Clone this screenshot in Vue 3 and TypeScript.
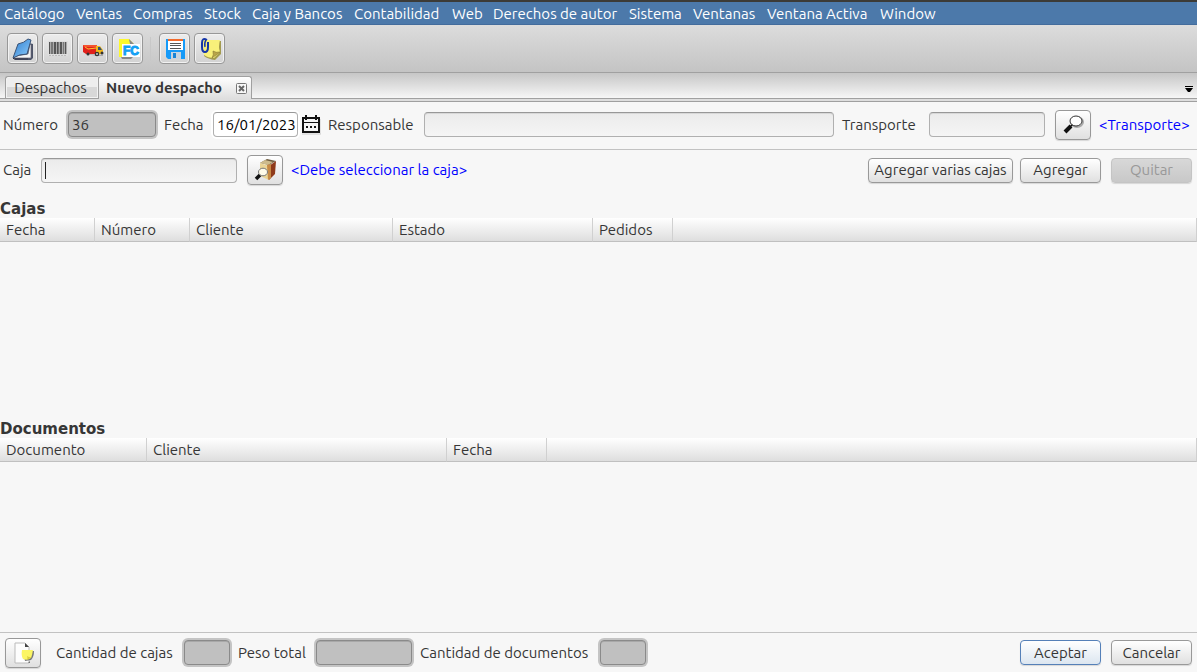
<script setup lang="ts">
import { ref } from 'vue'

interface Column {
  title: string
  width: number
}

const menus: string[] = [
  'Catálogo', 'Ventas', 'Compras', 'Stock', 'Caja y Bancos', 'Contabilidad',
  'Web', 'Derechos de autor', 'Sistema', 'Ventanas', 'Ventana Activa', 'Window',
]

const boxColumns: Column[] = [
  { title: 'Fecha', width: 95 },
  { title: 'Número', width: 95 },
  { title: 'Cliente', width: 203 },
  { title: 'Estado', width: 200 },
  { title: 'Pedidos', width: 80 },
]

const documentColumns: Column[] = [
  { title: 'Documento', width: 147 },
  { title: 'Cliente', width: 300 },
  { title: 'Fecha', width: 100 },
]

const dispatchNumber = ref('36')
const date = ref('16/01/2023')
const responsible = ref('')
const transport = ref('')
const box = ref('')
</script>

<template>
  <div class="window">
    <nav class="menubar">
      <button v-for="menu in menus" :key="menu" type="button">{{ menu }}</button>
    </nav>

    <div class="toolbar">
      <button type="button" class="tool" aria-label="Catálogo">
        <svg width="24" height="24" viewBox="0 0 24 24">
          <defs>
            <linearGradient id="book" x1="0" y1="0" x2="1" y2="1">
              <stop offset="0" stop-color="#2f7fd0" /><stop offset="1" stop-color="#8fcdfc" />
            </linearGradient>
          </defs>
          <path d="M18 6l4 1v14l-2 2H4l-1-2z" fill="#4d5468" />
          <path d="M3 21l2-2 12-2 2-10 1 1v13z" fill="#f4f4f4" stroke="#667" stroke-width=".7" />
          <path d="M7 7q6-1 10-5l3 1-4 14Q8 17 2 21z" fill="url(#book)" stroke="#3b5376" stroke-width="1" />
          <path d="M2 21l1 1h14" fill="none" stroke="#334" stroke-width="1" />
        </svg>
      </button>
      <button type="button" class="tool" aria-label="Código de barras">
        <svg width="24" height="24" viewBox="0 0 24 24">
          <path d="M2 4h20v15H2z" fill="#dedede" />
          <path d="M3 5h1v12H3zM8 5h2v12H8zM11 5h1v12h-1zM14 5h2v12h-2zM19 5h1v12h-1z" fill="#555" />
          <path d="M5 5h2v12H5zM12 5h1v12h-1zM17 5h1v12h-1z" fill="#777" />
          <path d="M4 5h1v12H4zM7 5h1v12H7zM10 5h1v12h-1zM13 5h1v12h-1zM16 5h1v12h-1zM18 5h1v12h-1zM20 5h1v12h-1z" fill="#aaa" />
          <path d="M3 18.500h18" stroke="#bbb" stroke-width="1" stroke-dasharray="2 1" />
        </svg>
      </button>
      <button type="button" class="tool" aria-label="Despachos">
        <svg width="24" height="24" viewBox="0 0 24 24">
          <path d="M3 17l14 2h5v-1z" fill="#aaa" />
          <path d="M2 8h14v9H5l-3-2z" fill="#e0211b" />
          <path d="M2 8h14v2H3z" fill="#f5532e" />
          <path d="M4 10l3 2 8-1" fill="none" stroke="#ffc42e" stroke-width="1" />
          <path d="M15 9h4l3 4v4h-7z" fill="#f0b51b" />
          <path d="M17 10h2l2 3h-4z" fill="#35536c" />
          <circle cx="7" cy="17" r="1.500" fill="#333" /><circle cx="16" cy="17" r="2.300" fill="#333" />
          <circle cx="21" cy="16" r="1.500" fill="#333" /><circle cx="16" cy="17" r="1" fill="#ccc" />
        </svg>
      </button>
      <button type="button" class="tool" aria-label="Factura">
        <svg width="24" height="24" viewBox="0 0 24 24">
          <path d="M5 20h12l-2 2H6z" fill="#888" />
          <path d="M3 2h10l5 5v13H3z" fill="#fdf92c" />
          <path d="M13 2l5 5h-4z" fill="#888" />
          <path d="M6 7h18v13H6z" fill="#fff" />
          <text x="15" y="18" class="fc">FC</text>
        </svg>
      </button>
      <span class="separator"></span>
      <button type="button" class="tool" aria-label="Guardar">
        <svg width="24" height="24" viewBox="0 0 24 24">
          <path d="M3 2h19v20H5l-2-2z" fill="#159af8" />
          <path d="M5 3h15v10H5z" fill="#fff" /><path d="M5 2h15v2H5z" fill="#f26a2b" />
          <path d="M7 6.500h11M7 8.500h11M7 11.500h11" stroke="#555" stroke-width="1" />
          <path d="M8 15h10v7H8z" fill="#c8d4df" /><path d="M10 16h3v5h-3z" fill="#1784d6" />
        </svg>
      </button>
      <button type="button" class="tool" aria-label="Adjuntar nota">
        <svg width="24" height="24" viewBox="0 0 24 24">
          <path d="M7 4h16v13l-6 6q-7-1-11-4z" fill="#a39b50" />
          <path d="M5 3h17q-2 7 0 12l-6 6q-6 0-10-3-1-6-1-15z" fill="#f8f07a" />
          <path d="M14 21q2-3 1-7 3 2 7 1z" fill="#b9a548" stroke="#847734" stroke-width=".6" />
          <path d="M9 3Q4 0 4 6v4q0 5 3 5t3-5V5" fill="none" stroke="#1536a8" stroke-width="2" />
          <path d="M8 3q-2 3-1 7" fill="none" stroke="#1536a8" stroke-width="1.400" />
        </svg>
      </button>
    </div>

    <div class="tabs" role="tablist">
      <button type="button" class="tab first" role="tab" aria-selected="false">Despachos</button>
      <div class="tab active">
        <button type="button" class="tab-title" role="tab" aria-selected="true">Nuevo despacho</button>
        <button type="button" class="close" aria-label="Cerrar">
          <svg width="11" height="11" viewBox="0 0 11 11">
            <rect x=".5" y=".5" width="10" height="10" rx="1" fill="#f8f8f8" stroke="#777" />
            <path d="M3 3l5 5M8 3L3 8" stroke="#666" stroke-width="2" />
          </svg>
        </button>
      </div>
      <button type="button" class="tab-list" aria-label="Lista de pestañas">
        <svg width="8" height="6" viewBox="0 0 8 6"><path d="M0 0h8v1H0zM0 2h8L5 6H3z" fill="#000" /></svg>
      </button>
    </div>

    <form class="content" @submit.prevent>
      <div class="row general">
        <label for="number" class="number-label">Número</label>
        <input id="number" v-model="dispatchNumber" class="locked number" type="text" readonly />
        <label for="date" class="date-label">Fecha</label>
        <input id="date" v-model="date" class="date" type="text" />
        <button type="button" class="calendar" aria-label="Elegir fecha">
          <svg width="20" height="20" viewBox="0 0 20 20">
            <path d="M1 3h18v15H1z" fill="#eee" />
            <path d="M2 3h16v14H2z" fill="#f4f4f4" stroke="#111" stroke-width="2" />
            <path d="M1 7.500h18" stroke="#111" stroke-width="1" />
            <path d="M5 0v5M15 0v5" stroke="#111" stroke-width="2" />
            <path d="M5 11h2v2H5zM9 11h2v2H9zM13 11h2v2h-2z" fill="#111" />
            <path d="M1 19h19V4" fill="none" stroke="#ccc" stroke-width="1" />
          </svg>
        </button>
        <label for="responsible" class="responsible-label">Responsable</label>
        <input id="responsible" v-model="responsible" class="grow" type="text" />
        <label for="transport" class="transport-label">Transporte</label>
        <input id="transport" v-model="transport" class="transport" type="text" />
        <button type="button" class="search" aria-label="Buscar transporte">
          <svg width="24" height="24" viewBox="0 0 24 24">
            <ellipse cx="16" cy="9" rx="6" ry="5" fill="none" stroke="#aaa" stroke-width="2" />
            <path d="M10 13l-6 6" stroke="#111" stroke-width="4" />
            <path d="M9 14l3-3" stroke="#111" stroke-width="1.500" />
            <ellipse cx="15" cy="8" rx="6" ry="5" fill="#fff" stroke="#333" stroke-width="1" />
          </svg>
        </button>
        <span class="hint transport-hint">&lt;Transporte&gt;</span>
      </div>

      <div class="row box-row">
        <label for="box" class="box-label">Caja</label>
        <span class="box-field">
          <input id="box" v-model="box" type="text" />
          <span class="caret"></span>
        </span>
        <button type="button" class="search" aria-label="Buscar caja">
          <svg width="24" height="24" viewBox="0 0 24 24">
            <path d="M7 5l7-4 9 2-7 4z" fill="#6e5d3f" />
            <path d="M7 5l5-3 8 2-5 3z" fill="#cdbb8c" />
            <path d="M7 5l9 3v14l-9-4z" fill="#ead596" />
            <path d="M16 8l7-5-1 13-6 6z" fill="#8f3a1a" />
            <path d="M14 7l4-1v14l-3 2z" fill="#c78a45" />
            <path d="M7 17l-4 4" stroke="#111" stroke-width="3.500" />
            <ellipse cx="10" cy="14" rx="4.500" ry="3.800" fill="#fffbe8" stroke="#777" stroke-width="1" />
          </svg>
        </button>
        <span class="hint">&lt;Debe seleccionar la caja&gt;</span>
        <div class="actions">
          <button type="button" class="push several">Agregar varias cajas</button>
          <button type="button" class="push">Agregar</button>
          <button type="button" class="push remove" disabled>Quitar</button>
        </div>
      </div>

      <section class="list boxes">
        <h2 id="boxes-title">Cajas</h2>
        <table aria-labelledby="boxes-title">
          <colgroup>
            <col v-for="c in boxColumns" :key="c.title" :style="{ width: c.width + 'px' }" />
            <col />
          </colgroup>
          <thead>
            <tr>
              <th v-for="c in boxColumns" :key="c.title" scope="col">{{ c.title }}</th>
              <td></td>
            </tr>
          </thead>
        </table>
      </section>

      <section class="list documents">
        <h2 id="documents-title">Documentos</h2>
        <table aria-labelledby="documents-title">
          <colgroup>
            <col v-for="c in documentColumns" :key="c.title" :style="{ width: c.width + 'px' }" />
            <col />
          </colgroup>
          <thead>
            <tr>
              <th v-for="c in documentColumns" :key="c.title" scope="col">{{ c.title }}</th>
              <td></td>
            </tr>
          </thead>
        </table>
      </section>

      <footer class="row footer">
        <button type="button" class="search note" aria-label="Observaciones">
          <svg width="24" height="24" viewBox="0 0 24 24">
            <path d="M4 2h10l4 4v16H4z" fill="#fdfdfd" stroke="#bbb" stroke-width="1" />
            <path d="M14 2v4h4z" fill="#444" />
            <path d="M8 22h9l2-2v2z" fill="#777" />
            <path d="M12 10h11q0 6-3 9l-6 1z" fill="#777" />
            <path d="M11 9h11q-1 6-2 8-4 3-8 1-2-3-1-9z" fill="#fbf564" />
            <path d="M16 19q1-2 0-4 3 2 5 1z" fill="#d9cd3d" />
          </svg>
        </button>
        <label for="box-count" class="box-count-label">Cantidad de cajas</label>
        <input id="box-count" class="locked count" type="text" readonly />
        <label for="weight" class="weight-label">Peso total</label>
        <input id="weight" class="locked weight" type="text" readonly />
        <label for="document-count" class="document-count-label">Cantidad de documentos</label>
        <input id="document-count" class="locked count" type="text" readonly />
        <div class="actions">
          <button type="submit" class="push primary">Aceptar</button>
          <button type="button" class="push cancel">Cancelar</button>
        </div>
      </footer>
    </form>
  </div>
</template>

<style>
body {
  margin: 0;
}
</style>

<style scoped>
* {
  box-sizing: border-box;
}

.window {
  display: flex;
  flex-direction: column;
  min-height: 100vh;
  background: #f7f7f7;
  color: #363636;
  font: 15px/20px Ubuntu, "Noto Sans", sans-serif;
}

button,
input {
  margin: 0;
  padding: 0;
  font: inherit;
  color: inherit;
  white-space: nowrap;
}

button {
  border: 0;
  background: none;
}

svg {
  display: block;
}

.menubar {
  display: grid;
  grid-template-columns: 72px 57px 71px 48px 102px 98px 41px 136px 64px 74px 113px 1fr;
  height: 25px;
  padding-left: 4px;
  border-top: 2px solid #3c3b37;
  border-bottom: 1px solid #436c9c;
  background: #4c79aa;
  color: #fff;
}

.menubar button {
  padding-top: 1px;
  text-align: left;
}

.toolbar {
  display: flex;
  align-items: center;
  gap: 4px;
  height: 48px;
  padding-left: 7px;
  border-bottom: 1px solid #a0a0a0;
  background: linear-gradient(#dcdcdc, #c4c4c4);
}

.tool,
.search {
  display: flex;
  align-items: center;
  justify-content: center;
  border: 1px solid #989898;
  border-radius: 4px;
  background: linear-gradient(#fff, #e0e0e0);
  box-shadow: 0 1px 1px #0002;
}

.tool {
  width: 31px;
  height: 31px;
  background: linear-gradient(#ececec, #d2d2d2);
  box-shadow: inset 0 0 0 1px #f2f2f2;
}

.fc {
  font: bold 12px "Liberation Sans", sans-serif;
  fill: #12a0f4;
  stroke: #12a0f4;
  stroke-width: 1px;
  text-anchor: middle;
}

.separator {
  width: 2px;
  height: 24px;
  margin: 0 3px;
  border-left: 1px solid #c8c8c8;
}

.tabs {
  display: flex;
  align-items: flex-end;
  height: 26px;
  padding-left: 5px;
  background: linear-gradient(#c6c6c6, #f8f8f8);
  box-shadow: inset 0 -1px #a0a0a0;
}

.tab {
  height: 23px;
  border: 1px solid #a0a0a0;
}

.tab.first {
  width: 93px;
  padding: 1px 3px 0 0;
  border-right: 0;
  border-radius: 3px 0 0 0;
  background: linear-gradient(#eee 0 50%, #d8d8d8 50% 100%);
  box-shadow: inset 0 0 0 1px #f2f2f2;
  text-align: center;
  line-height: 20px;
}

.tab.active {
  display: flex;
  align-items: center;
  justify-content: space-between;
  width: 154px;
  padding: 0 4px 0 7px;
  border-bottom: 0;
  border-radius: 3px 3px 0 0;
  background: linear-gradient(#fff, #dedede);
}

.tab-title {
  font-weight: bold;
}

.tab-list {
  margin-left: auto;
  padding: 0 4px 7px;
}

.content {
  display: flex;
  flex: 1;
  flex-direction: column;
  border-top: 2px solid #dedede;
  box-shadow: inset 0 1px #a0a0a0;
}

.row {
  display: flex;
  align-items: center;
}

.row > * {
  flex: none;
}

.general {
  height: 49px;
  padding-bottom: 1px;
  border-bottom: 1px solid #c2c2c2;
}

input {
  height: 25px;
  padding: 0 3px;
  border: 1px solid #b0b0b0;
  border-top-color: #989898;
  border-radius: 4px;
  outline: 0;
  background: linear-gradient(#ebebeb, #f5f5f5);
  box-shadow: inset 0 1px #d8d8d8;
}

.row > .grow {
  flex: 1;
  min-width: 40px;
}

input.locked {
  border-color: #8a8a8a;
  background: #c0c0c0;
  box-shadow: 0 0 0 2px #c4c4c4, inset 0 1px #a8a8a8;
}

.number {
  width: 88px;
}

input.date {
  width: 85px;
  padding-right: 0;
  background: #fff;
  color: #000;
  box-shadow: 0 0 0 2px #fff;
}

.number-label {
  width: 68px;
  padding-left: 3px;
}

.date-label {
  width: 57px;
  padding-left: 8px;
}

.calendar {
  width: 20px;
  margin-left: 3px;
}

.responsible-label {
  width: 103px;
  padding-left: 7px;
}

.transport-label {
  width: 95px;
  padding-left: 8px;
}

.transport {
  width: 116px;
}

.search {
  width: 36px;
  height: 30px;
  margin-left: 10px;
}

.hint {
  padding-left: 8px;
  color: #00f;
}

.transport-hint {
  width: 106px;
}

.box-row {
  height: 40px;
  margin-bottom: 8px;
}

.box-label {
  width: 41px;
  padding-left: 3px;
}

.box-field {
  position: relative;
  display: flex;
  width: 196px;
}

.box-field input {
  width: 100%;
}

.caret {
  position: absolute;
  top: 4px;
  left: 4px;
  width: 1px;
  height: 17px;
  background: #222;
}

.actions {
  display: flex;
  margin-left: auto;
  padding-right: 5px;
}

.push {
  width: 81px;
  height: 25px;
  border: 1px solid #999;
  border-radius: 4px;
  background: linear-gradient(#fff, #e0e0e0);
  box-shadow: 0 1px 1px #0002;
  text-align: center;
}

.several {
  width: 145px;
  margin-right: 7px;
}

.remove,
.cancel {
  margin-left: 10px;
}

.push:disabled {
  border-color: #c4c4c4;
  background: linear-gradient(#d8d8d8, #c8c8c8);
  color: #999;
}

.primary {
  border-color: #5580b8;
  background: linear-gradient(#fff, #dce6f0);
}

.boxes {
  flex: 220 0 0;
}

.documents {
  flex: 214 0 0;
}

h2 {
  margin: 0;
  padding-top: 2px;
  font: bold 15px/18px "DejaVu Sans", sans-serif;
}

table {
  width: 100%;
  table-layout: fixed;
  border-spacing: 0;
}

th,
td {
  height: 24px;
  padding: 0 6px;
  border-right: 1px solid #d0d0d0;
  border-bottom: 1px solid #c0c0c0;
  background: linear-gradient(#fff, #dedede);
  font-weight: normal;
  text-align: left;
}

.footer {
  height: 40px;
  border-top: 1px solid #c2c2c2;
}

.note {
  margin-left: 5px;
}

.box-count-label {
  width: 143px;
  padding-left: 15px;
}

.count {
  width: 46px;
}

.weight-label {
  width: 86px;
  padding-left: 8px;
}

.weight {
  width: 96px;
}

.document-count-label {
  width: 188px;
  padding-left: 8px;
}
</style>
